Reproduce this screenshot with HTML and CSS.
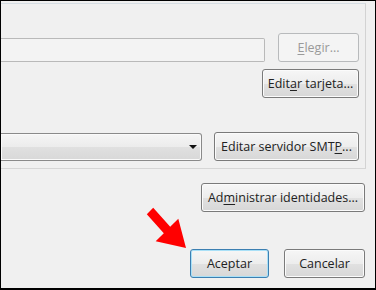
FILE: index.html
```html
<!DOCTYPE html>
<html lang="es">
<head>
  <meta charset="UTF-8" />
  <title>Configuración de cuenta</title>
  <link rel="stylesheet" href="styles.css">
</head>
<body>
  <div class="screen">
    <div class="group">
      <div class="row row-file">
        <input type="text" class="field" disabled />
        <button class="btn btn-elegir" disabled><u>E</u>legir...</button>
      </div>
      <div class="row row-right">
        <button class="btn btn-tarjeta">Edit<u>a</u>r tarjeta...</button>
      </div>
      <div class="row row-smtp">
        <div class="select">
          <span class="select-arrow"></span>
        </div>
        <button class="btn btn-smtp">Editar servidor SMT<u>P</u>...</button>
      </div>
    </div>

    <div class="row row-right row-ident">
      <button class="btn btn-ident">Ad<u>m</u>inistrar identidades...</button>
    </div>

    <div class="row row-right row-actions">
      <button class="btn btn-ok">Aceptar</button>
      <button class="btn btn-cancel">Cancelar</button>
    </div>

    <!-- red pointer drawn over the dialog -->
    <svg class="pointer" width="376" height="290" viewBox="0 0 376 290">
      <polygon points="153.2,207.8 170.2,226.8 178.3,218.7 186,248 155.7,241.3 163.8,233.2 146.8,214.2" fill="#ff0000" />
    </svg>
  </div>
</body>
</html>
```

FILE: styles.css
```css
/* Global */
* {
  margin: 0;
  padding: 0;
  box-sizing: border-box;
}

body {
  background: #000;
  font-family: 'Open Sans', 'Noto Sans', sans-serif;
  font-size: 12.5px;
  color: #222;
}

.screen {
  position: relative;
  width: 376px;
  height: 290px;
  border: 1px solid #000;
  border-bottom-width: 2px;
  background: #f0f0f0;
  padding-right: 10px;
  overflow: hidden;
}

/* Group box (left side is cut off) */
.group {
  margin-top: 2px;
  margin-right: -1px;
  border-top: 1px solid #d6dee4;
  border-right: 1px solid #d3d3d3;
  border-bottom: 1px solid #d6d6d6;
  padding: 29px 6px 7px 0;
}

.row {
  display: flex;
  align-items: flex-end;
}

.row-right {
  justify-content: flex-end;
}

.row-file .field {
  flex: 1;
  height: 24px;
  margin-right: 13px;
  border: 1px solid #b9b9b9;
  border-left: none;
  border-radius: 0 2px 2px 0;
  background: #f3f3f3;
}

.row-right {
  margin-top: 7px;
}

.row-smtp {
  margin-top: 34px;
  align-items: center;
}

.select {
  position: relative;
  flex: 1;
  height: 28px;
  margin-right: 12px;
  border: 1px solid #8a8a8a;
  border-left: none;
  border-radius: 0 3px 3px 0;
  background: linear-gradient(#f5f5f5 0%, #ececec 50%, #e0e0e0 51%, #d8d8d8 100%);
  box-shadow: inset 0 0 0 1px #fafafa;
}

.select-arrow {
  position: absolute;
  right: 4px;
  top: 11px;
  border-left: 4px solid transparent;
  border-right: 4px solid transparent;
  border-top: 4px solid #111;
}

/* Buttons */
.btn {
  height: 29px;
  border: 1px solid #7a7a7a;
  border-radius: 3px;
  background: linear-gradient(#f6f6f6 0%, #ededed 50%, #e1e1e1 51%, #d7d7d7 100%);
  box-shadow: inset 0 0 0 1px #fbfbfb;
  font: inherit;
  color: #222;
  text-align: center;
}

.btn u {
  text-decoration-thickness: 1px;
  text-underline-offset: 2px;
}

.btn:disabled {
  border-color: #b8babc;
  background: #f4f4f4;
  color: #9a9a9a;
  box-shadow: none;
}

.btn-elegir { width: 81px; }
.btn-tarjeta { width: 97px; }
.btn-smtp { width: 145px; }

.row-ident {
  margin-top: 14px;
}

.btn-ident { width: 164px; }

.row-actions {
  margin-top: 37px;
  gap: 15px;
}

.btn-ok {
  width: 79px;
  border-color: #3c7fb1;
  box-shadow: inset 0 0 0 1px #a9e0f7;
}

.btn-cancel { width: 81px; }

/* Annotation arrow */
.pointer {
  position: absolute;
  left: -1px;
  top: -1px;
}
```
